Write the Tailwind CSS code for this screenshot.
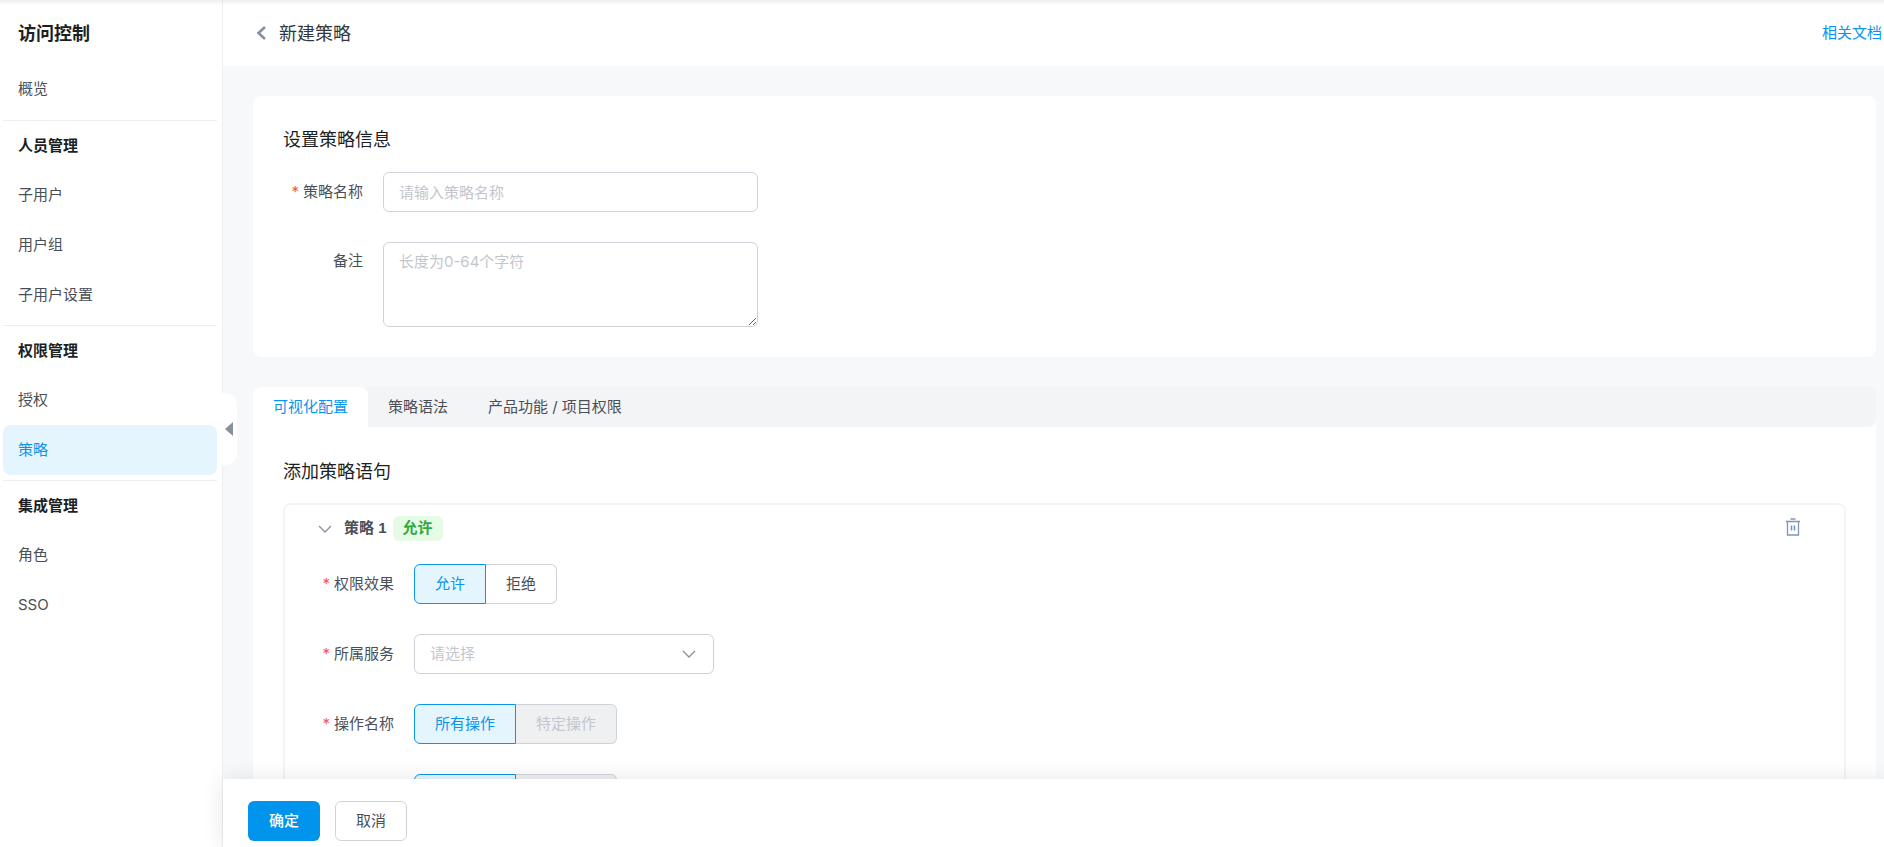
<!DOCTYPE html>
<html lang="zh-CN">
<head>
  <meta charset="UTF-8">
  <title>新建策略 - 访问控制</title>
  <script src="https://cdn.jsdelivr.net/npm/@tailwindcss/browser@4"></script>
</head>
<body class="font-['Inter','Noto_Sans_CJK_SC',sans-serif] text-[15px] text-[#4a4f57] bg-[#f7f8fa]">
<div class="relative flex h-screen overflow-hidden">
  <!-- top shade -->
  <div class="absolute inset-x-0 top-0 z-20 h-[6px] bg-linear-to-b from-black/6 to-transparent"></div>

  <!-- Sidebar -->
  <aside class="w-[223px] shrink-0 bg-white border-r border-[#eeeff1] pl-[3px] pr-[5px]">
    <div class="h-[64px] pl-[15px] pt-[2px] flex items-center text-[18px] font-bold text-[#1c1f24]">访问控制</div>
    <a class="h-[50px] pl-[15px] flex items-center">概览</a>
    <div class="mt-[6px] h-px bg-[#eeeff1]"></div>
    <div class="h-[49px] pl-[15px] pt-[2px] flex items-center font-bold text-[#1c1f24]">人员管理</div>
    <a class="h-[50px] pl-[15px] flex items-center">子用户</a>
    <a class="h-[50px] pl-[15px] flex items-center">用户组</a>
    <a class="h-[50px] pl-[15px] flex items-center">子用户设置</a>
    <div class="mt-[5px] h-px bg-[#eeeff1]"></div>
    <div class="h-[49px] pl-[15px] pt-[2px] flex items-center font-bold text-[#1c1f24]">权限管理</div>
    <a class="h-[50px] pl-[15px] flex items-center">授权</a>
    <a class="h-[50px] pl-[15px] flex items-center rounded-lg bg-[#e5f5fe] text-[#0a94ec]">策略</a>
    <div class="mt-[5px] h-px bg-[#eeeff1]"></div>
    <div class="h-[49px] pl-[15px] pt-[2px] flex items-center font-bold text-[#1c1f24]">集成管理</div>
    <a class="h-[50px] pl-[15px] flex items-center">角色</a>
    <a class="h-[50px] pl-[15px] flex items-center">SSO</a>
  </aside>

  <!-- Collapse handle -->
  <div class="absolute left-[222px] top-[393px] z-10 flex h-[72px] w-[15px] items-center rounded-r-xl bg-white pl-[3px]">
    <svg width="8" height="14" viewBox="0 0 8 14"><path d="M8 0V14L0 7Z" fill="#86919f"/></svg>
  </div>

  <!-- Main -->
  <div class="flex-1 min-w-0 flex flex-col">
    <header class="h-[66px] shrink-0 bg-white flex items-center justify-between pl-[33px] pr-[2px]">
      <div class="flex items-center">
        <svg width="10" height="14" viewBox="0 0 10 14" fill="none" stroke="#86919f" stroke-width="2.6"><path d="M9 1L2.5 7 9 13"/></svg>
        <span class="ml-[13px] text-[18px] text-[#33373d]">新建策略</span>
      </div>
      <a class="text-[#0a94ec]">相关文档</a>
    </header>

    <main class="flex-1 min-h-0 pl-[30px] pr-[8px] pt-[30px]">
      <!-- Policy info -->
      <section class="bg-white rounded-lg px-[30px] py-[30px]">
        <h2 class="h-[26px] text-[18px] leading-[28px] text-[#1c1f24]">设置策略信息</h2>
        <div class="mt-[20px] flex items-center gap-[20px]">
          <label class="w-[80px] text-right whitespace-nowrap"><span class="text-[#f5564e] mr-[4px]">*</span>策略名称</label>
          <input class="w-[375px] h-[40px] rounded-md border border-[#cfd3d9] px-[15px] placeholder:text-[#c4c6cc]" placeholder="请输入策略名称">
        </div>
        <div class="flex items-start gap-[20px] mt-[30px]">
          <label class="w-[80px] text-right pt-[8px]">备注</label>
          <textarea class="block w-[375px] h-[85px] rounded-md border border-[#cfd3d9] px-[15px] pt-[8px] placeholder:text-[#c4c6cc]" placeholder="长度为0-64个字符"></textarea>
        </div>
      </section>

      <!-- Tabs panel -->
      <section class="bg-white rounded-lg mt-[30px] h-[600px]">
        <div class="flex h-[40px] rounded-lg bg-[#f3f4f6]">
          <a class="flex items-center px-[20px] bg-white rounded-t-lg text-[#0a94ec]">可视化配置</a>
          <a class="flex items-center px-[20px]">策略语法</a>
          <a class="flex items-center px-[20px]">产品功能 / 项目权限</a>
        </div>
        <div class="px-[30px] pt-[31px]">
          <h2 class="h-[26px] text-[18px] leading-[28px] text-[#1c1f24] mb-[19px]">添加策略语句</h2>
          <div class="rounded-lg border-2 border-[#f3f4f6] h-[500px]">
            <div class="flex items-center justify-between pl-[33px] pr-[43px] pt-[11px]">
              <div class="flex items-center">
                <svg width="14" height="8" viewBox="0 0 14 8" fill="none" stroke="#86919f" stroke-width="1.3"><path d="M1 1l6 6 6-6"/></svg>
                <span class="ml-[12px] font-['Liberation_Sans','Noto_Sans_CJK_SC',sans-serif] font-bold text-[#4a4f57]">策略 1</span>
                <span class="ml-[6px] flex h-[25px] w-[50px] items-center justify-center rounded-md bg-[#e6fbe6] font-bold text-[#2faa3f]">允许</span>
              </div>
              <svg class="-mt-[3px]" width="16" height="18" viewBox="0 0 16 18" fill="none" stroke="#7f95b5" stroke-width="1.3"><path d="M1 3.5h14M5.5 1h5M2.5 3.5V17h11V3.5"/><path d="M6.5 7.5v5M9.5 7.5v5" stroke-width="1.6"/></svg>
            </div>

            <div class="pt-[23px] flex flex-col gap-[30px]">
              <div class="flex items-center gap-[20px]">
                <label class="w-[109px] text-right"><span class="text-[#f5564e] mr-[4px]">*</span>权限效果</label>
                <div class="flex h-[40px]">
                  <button class="w-[72px] rounded-l-md border border-[#0a94ec] bg-[#e5f5fe] text-[#0a94ec]">允许</button>
                  <button class="w-[71px] rounded-r-md border border-l-0 border-[#cfd3d9]">拒绝</button>
                </div>
              </div>
              <div class="flex items-center gap-[20px]">
                <label class="w-[109px] text-right"><span class="text-[#f5564e] mr-[4px]">*</span>所属服务</label>
                <div class="flex h-[40px] w-[300px] items-center justify-between rounded-md border border-[#cfd3d9] pl-[15px] pr-[17px] text-[#c4c6cc]">
                  <span>请选择</span>
                  <svg width="14" height="8" viewBox="0 0 14 8" fill="none" stroke="#86919f" stroke-width="1.3"><path d="M1 1l6 6 6-6"/></svg>
                </div>
              </div>
              <div class="flex items-center gap-[20px]">
                <label class="w-[109px] text-right"><span class="text-[#f5564e] mr-[4px]">*</span>操作名称</label>
                <div class="flex h-[40px]">
                  <button class="w-[102px] rounded-l-md border border-[#0a94ec] bg-[#e5f5fe] text-[#0a94ec]">所有操作</button>
                  <button class="w-[101px] rounded-r-md border border-l-0 border-[#cfd3d9] bg-[#eff0f2] text-[#c4c6cc]">特定操作</button>
                </div>
              </div>
              <div class="flex items-center gap-[20px]">
                <div class="w-[109px]"></div>
                <div class="flex h-[40px]">
                  <div class="w-[102px] rounded-l-md border border-[#0a94ec] bg-[#e5f5fe]"></div>
                  <div class="w-[101px] rounded-r-md border border-l-0 border-[#cfd3d9] bg-[#eff0f2]"></div>
                </div>
              </div>
            </div>
          </div>
        </div>
      </section>
    </main>
  </div>

  <!-- Footer bar -->
  <footer class="absolute left-[223px] right-0 bottom-0 z-10 flex h-[68px] items-start gap-[15px] bg-white pl-[25px] pt-[22px] shadow-[0_0_20px_rgba(0,0,0,0.1)]">
    <button class="h-[40px] w-[72px] rounded-md bg-[#0094ec] font-medium text-white">确定</button>
    <button class="h-[40px] w-[72px] rounded-md border border-[#cfd3d9] bg-white">取消</button>
  </footer>
</div>
</body>
</html>
